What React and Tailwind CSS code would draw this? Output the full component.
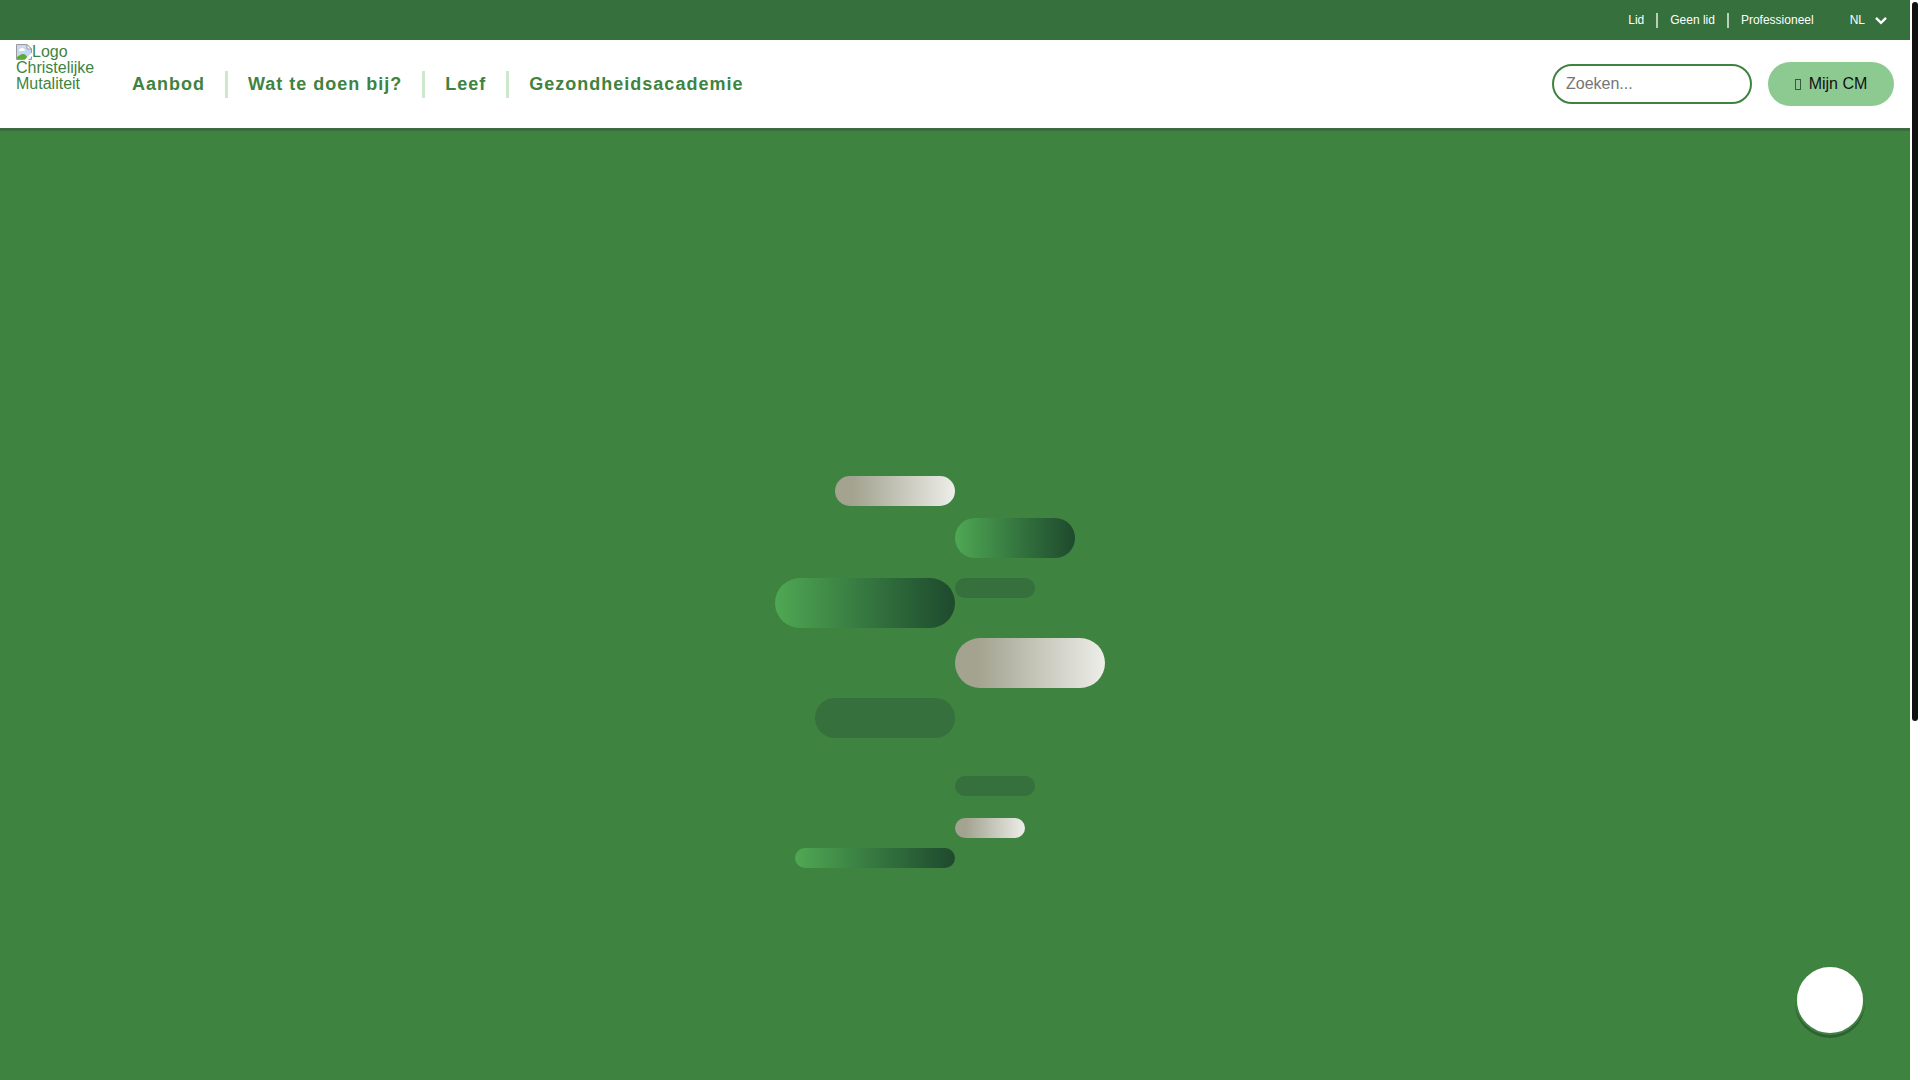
const audiences = ["Lid", "Geen lid", "Professioneel"];
const menu = ["Aanbod", "Wat te doen bij?", "Leef", "Gezondheidsacademie"];

const sand = "bg-linear-to-r from-[#a3a390] from-15% to-[#eeeeea]";
const forest = "bg-linear-to-r from-[#4fa853] to-[#1e4a2d]";
const plain = "bg-[#35703d]";

const LogoIcon = () => (
  <svg className="inline-block align-top w-4 h-4" viewBox="0 0 16 16" aria-hidden="true">
    <path d="M1 1h10l4 4v10H1z" fill="#c6d7f5" />
    <path d="M3 6a1.6 1.6 0 0 1 1.500-1.500 2 2 0 0 1 3.500.5 1 1 0 0 1 0 2H3z" fill="#fff" />
    <path d="M1 15v-2c2-1 3.500-3 6-3s4 2 5 5z" fill="#5cab36" />
    <path d="M.5 15.500V.5h10.500l4.500 4.500v10.500z" fill="none" stroke="#9a9a9a" />
    <path d="M11 .5v4.500h4.500z" fill="#fff" stroke="#9a9a9a" />
    <path d="M16 8.500 8.500 16h3.500l4-4z" fill="#fff" />
  </svg>
);

const TopBar = () => {
  return (
    <div className="flex h-10 items-center justify-end bg-[#35703d] pr-[23px] text-xs text-white">
      <ul className="flex items-center">
        {audiences.map((name, i) => (
          <li key={name} className="flex items-center">
            {i > 0 ? <span className="mx-3 h-[15px] w-0.5 bg-[#b9cfbc]" /> : null}
            <a href="#">{name}</a>
          </li>
        ))}
      </ul>
      <button className="ml-9 flex items-center gap-2.5">
        NL
        <svg className="h-3 w-3" viewBox="0 0 12 12" fill="none" stroke="currentColor" strokeWidth="2.4" aria-hidden="true">
          <path d="M1 3.800 6 8.800l5-5" />
        </svg>
      </button>
    </div>
  );
};

const Header = () => {
  return (
    <header className="flex h-[91px] items-center border-b-3 border-[#3c6b40] bg-white px-4">
      <a href="#" className="mt-1 w-[84px] self-start text-base leading-4 text-[#3f8341]">
        <LogoIcon />
        Logo Christelijke Mutaliteit
      </a>
      <nav className="ml-8">
        <ul className="flex items-center">
          {menu.map((item, i) => (
            <li key={item} className="flex items-center">
              {i > 0 ? <span className="mx-5 h-[27px] w-[3px] bg-[#cde8cd]" /> : null}
              <a href="#" className="text-lg font-bold tracking-[1px] text-[#3f8341]">
                {item}
              </a>
            </li>
          ))}
        </ul>
      </nav>
      <div className="ml-auto flex items-center gap-4">
        <input
          type="search"
          aria-label="Zoeken"
          placeholder="Zoeken..."
          className="h-10 w-[200px] rounded-full border-2 border-[#3f8341] bg-white px-3 text-base placeholder:text-[#757575]"
        />
        <button className="flex h-11 w-[126px] items-center justify-center gap-2 rounded-full bg-[#8dca92] text-base text-[#111]">
          <span className="h-[11px] w-1.5 border border-[#3d573f]" />
          Mijn CM
        </button>
      </div>
    </header>
  );
};

const Hero = () => {
  return (
    <main className="grid flex-1 grid-cols-2 content-start bg-[#3f8341] pt-[345px]">
      <div className="flex flex-col items-end">
        <div className={`h-[30px] w-[120px] rounded-full ${sand}`} />
        <div className={`mt-[72px] h-[50px] w-[180px] rounded-full ${forest}`} />
        <div className={`mt-[70px] h-10 w-[140px] rounded-full ${plain}`} />
        <div className={`mt-[110px] h-5 w-40 rounded-full ${forest}`} />
      </div>
      <div className="flex flex-col items-start pt-[42px]">
        <div className={`h-10 w-[120px] rounded-full ${forest}`} />
        <div className={`mt-5 h-5 w-20 rounded-full ${plain}`} />
        <div className={`mt-10 h-[50px] w-[150px] rounded-full ${sand}`} />
        <div className={`mt-[88px] h-5 w-20 rounded-full ${plain}`} />
        <div className={`mt-[22px] h-5 w-[70px] rounded-full ${sand}`} />
      </div>
    </main>
  );
};

export default function App() {
  return (
    <div className="flex h-screen overflow-hidden bg-white font-['Liberation_Sans',Arial,sans-serif]">
      <div className="relative flex flex-1 flex-col">
        <TopBar />
        <Header />
        <Hero />
        <button
          aria-label="Chat"
          className="absolute right-[45px] bottom-[45px] h-[70px] w-[70px] rounded-full border-2 border-[#3f8341] bg-white shadow-[0_3px_0_#2f6132]"
        />
      </div>
      <div className="w-2.5 px-0.5 py-0.5">
        <div className="h-[719px] w-1.5 rounded-full bg-[#111]" />
      </div>
    </div>
  );
}
